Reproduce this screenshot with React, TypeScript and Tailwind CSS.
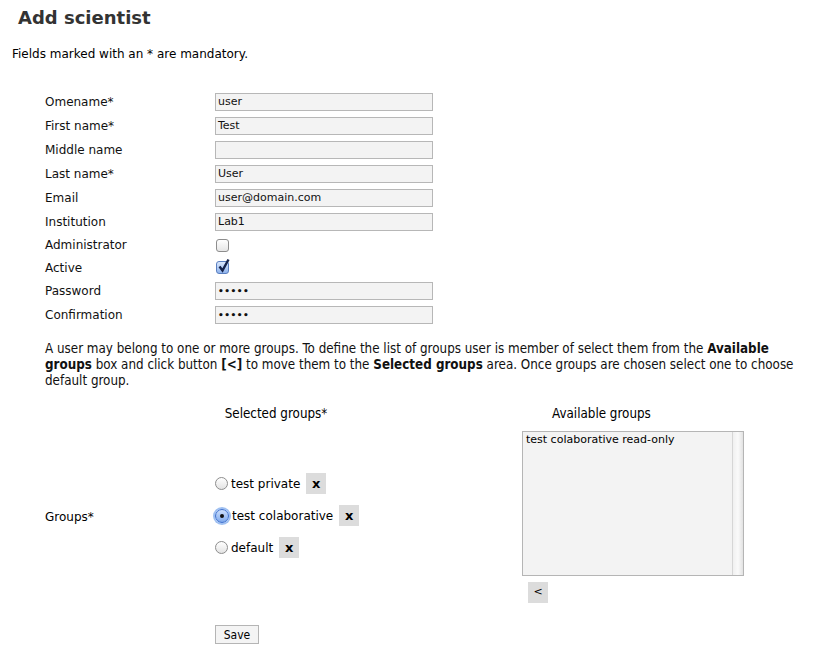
import React from 'react';

const fields: { label: string; value?: string; kind: 'text' | 'check' | 'pass'; checked?: boolean }[] = [
  { label: 'Omename*', value: 'user', kind: 'text' },
  { label: 'First name*', value: 'Test', kind: 'text' },
  { label: 'Middle name', value: '', kind: 'text' },
  { label: 'Last name*', value: 'User', kind: 'text' },
  { label: 'Email', value: 'user@domain.com', kind: 'text' },
  { label: 'Institution', value: 'Lab1', kind: 'text' },
  { label: 'Administrator', kind: 'check', checked: false },
  { label: 'Active', kind: 'check', checked: true },
  { label: 'Password', value: '•••••', kind: 'pass' },
  { label: 'Confirmation', value: '•••••', kind: 'pass' },
];

const groups = [
  { name: 'test private', on: false },
  { name: 'test colaborative', on: true },
  { name: 'default', on: false },
];

function Box({ checked }: { checked?: boolean }) {
  return (
    <div
      className={
        checked
          ? 'relative w-[13px] h-[13px] rounded-[3px] border border-[#5a7fc0] bg-gradient-to-b from-[#dbe8fc] to-[#8fb3ec]'
          : 'relative w-[13px] h-[13px] rounded-[3px] border border-[#8d8d8d] bg-gradient-to-b from-white to-[#e6e6e6]'
      }
    >
      {checked && (
        <svg viewBox="0 0 14 14" className="absolute left-[0px] top-[-4px] w-[14px] h-[15px]">
          <path d="M2.5 8 L5.5 12 L11.5 1" fill="none" stroke="#14224a" strokeWidth="2.4" />
        </svg>
      )}
    </div>
  );
}

function Radio({ on }: { on: boolean }) {
  return (
    <div
      className={
        on
          ? 'w-[14px] h-[14px] rounded-full border border-[#3b6fcf] bg-gradient-to-b from-[#cfe0fb] to-[#7fa9ec] flex items-center justify-center shadow-[0_0_0_2px_rgba(80,140,230,0.55)]'
          : 'w-[13px] h-[13px] rounded-full border border-[#8d8d8d] bg-gradient-to-b from-white to-[#e3e3e3]'
      }
    >
      {on && <div className="w-[4px] h-[4px] rounded-full bg-[#111]" />}
    </div>
  );
}

export default function App() {
  return (
    <div className="w-[819px] h-[665px] bg-white text-black text-[12px] font-['DejaVu_Sans',Verdana,sans-serif] overflow-hidden">
      <h1 className="pl-[18px] pt-[7px] text-[18px] font-bold text-[#333] leading-[22px]">Add scientist</h1>
      <p className="pl-[12px] mt-[17px] leading-[16px]">Fields marked with an * are mandatory.</p>

      {/* Formular */}
      <div className="pl-[45px] mt-[28px]">
        {fields.map(f => (
          <div key={f.label} className={`flex items-center ${f.kind === 'check' ? 'h-[22.5px]' : 'h-[24px]'}`}>
            <div className="w-[170px] text-[#111]">{f.label}</div>
            {f.kind === 'check' ? (
              <div className="pl-[1px]">
                <Box checked={f.checked} />
              </div>
            ) : (
              <div className="w-[218px] h-[18px] border border-[#b7b7b7] bg-[#f3f3f3] px-[2px] text-[11px] leading-[16px] text-[#111]">
                {f.kind === 'pass' ? <span className="text-[9px] tracking-[0.5px] font-bold">{f.value}</span> : f.value}
              </div>
            )}
          </div>
        ))}
      </div>

      <p className="pl-[45px] pr-[10px] mt-[14px] leading-[16px] font-['DejaVu_Sans_Condensed','DejaVu_Sans',sans-serif] text-[13.3px] text-[#111]">
        A user may belong to one or more groups. To define the list of groups user is member of select them from the <b>Available groups</b> box and click button <b>[&lt;]</b> to move them to the <b>Selected groups</b> area. Once groups are chosen select one to choose default group.
      </p>

      <div className="flex mt-[17px] pl-[45px] font-['DejaVu_Sans_Condensed','DejaVu_Sans',sans-serif] text-[13.3px]">
        <div className="w-[170px] pt-[101px]">
          <span className="font-['DejaVu_Sans',sans-serif] text-[12px]">Groups*</span>
        </div>
        <div className="w-[307px]">
          <div className="w-[122px] text-center leading-[16px]">Selected groups*</div>
          <div className="mt-[51px] flex flex-col gap-[11px] font-['DejaVu_Sans',sans-serif] text-[12px]">
            {groups.map(g => (
              <div key={g.name} className="flex items-center h-[21px]">
                <Radio on={g.on} />
                <span className="ml-[3px]">{g.name}</span>
                <span className="ml-[6px] w-[20px] h-[21px] bg-[#dcdcdc] flex items-center justify-center font-bold text-[13px]">x</span>
              </div>
            ))}
          </div>
        </div>
        <div className="flex flex-col">
          <div className="ml-[30px] leading-[16px]">Available groups</div>
          <div className="mt-[9px] w-[222px] h-[145px] border border-[#b5b5b5] bg-[#f3f3f3] flex font-['DejaVu_Sans',sans-serif]">
            <div className="flex-1 px-[3px] pt-[1px] text-[11px] leading-[14px]">test colaborative read-only</div>
            <div className="w-[11px] border-l border-[#d6d6d6] bg-gradient-to-r from-[#f0f0f0] via-[#fafafa] to-[#e2e2e2]" />
          </div>
          <div className="mt-[6px] ml-[6px] w-[20px] h-[21px] bg-[#dcdcdc] flex items-center justify-center text-[11px] font-['DejaVu_Sans',sans-serif]">&lt;</div>
        </div>
      </div>

      <div className="pl-[215px] mt-[22px]">
        <div className="w-[44px] h-[19px] border border-[#b5b5b5] bg-[#f4f4f4] flex items-center justify-center text-[12px] font-['DejaVu_Sans_Condensed','DejaVu_Sans',sans-serif]">Save</div>
      </div>
    </div>
  );
}
